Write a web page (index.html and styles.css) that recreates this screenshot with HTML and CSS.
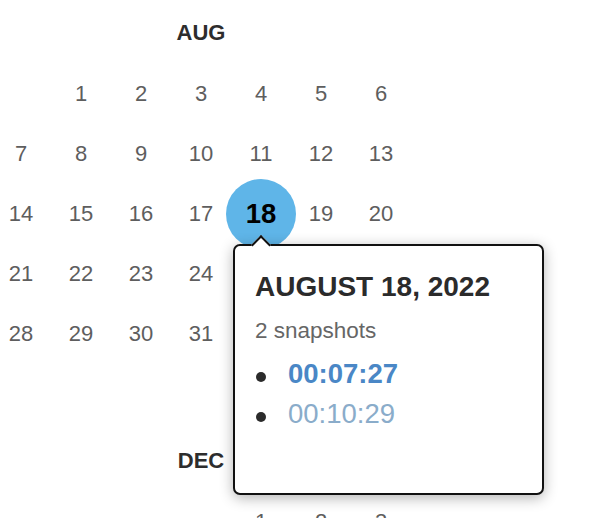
FILE: index.html
```html
<!DOCTYPE html>
<html lang="en">
<head>
<meta charset="utf-8">
<title>Snapshot calendar</title>
<link rel="stylesheet" href="styles.css">
</head>
<body>
<div class="calendar">
  <section class="month">
    <h2 class="month-name">AUG</h2>
    <div class="days">
      <span class="day"></span>
      <span class="day">1</span><span class="day">2</span><span class="day">3</span><span class="day">4</span><span class="day">5</span><span class="day">6</span>
      <span class="day">7</span><span class="day">8</span><span class="day">9</span><span class="day">10</span><span class="day">11</span><span class="day">12</span><span class="day">13</span>
      <span class="day">14</span><span class="day">15</span><span class="day">16</span><span class="day">17</span>
      <div class="day selected">
        <span class="dot">18</span>
        <div class="tooltip">
          <h3 class="tooltip-title">AUGUST 18, 2022</h3>
          <p class="tooltip-count">2 snapshots</p>
          <ul class="snapshots">
            <li><a class="snap snap-current" href="#">00:07:27</a></li>
            <li><a class="snap" href="#">00:10:29</a></li>
          </ul>
        </div>
      </div>
      <span class="day">19</span><span class="day">20</span>
      <span class="day">21</span><span class="day">22</span><span class="day">23</span><span class="day">24</span><span class="day">25</span><span class="day">26</span><span class="day">27</span>
      <span class="day">28</span><span class="day">29</span><span class="day">30</span><span class="day">31</span>
    </div>
  </section>
  <section class="month">
    <h2 class="month-name">DEC</h2>
    <div class="days">
      <span class="day"></span><span class="day"></span><span class="day"></span><span class="day"></span>
      <span class="day">1</span><span class="day">2</span><span class="day">3</span>
      <span class="day">4</span><span class="day">5</span><span class="day">6</span><span class="day">7</span><span class="day">8</span><span class="day">9</span><span class="day">10</span>
    </div>
  </section>
</div>
</body>
</html>
```

FILE: styles.css
```css
html, body {
  margin: 0;
  padding: 0;
  background: #ffffff;
}

body {
  font-family: "Liberation Sans", Arial, Helvetica, sans-serif;
  overflow: hidden;
}

.calendar {
  width: 420px;
  margin-left: -9px;
}

.month {
  margin-bottom: 4px;
}

.month-name {
  margin: 0;
  height: 63px;
  padding-top: 1px;
  line-height: 64px;
  font-size: 22px;
  font-weight: bold;
  color: #2d2d2d;
  text-align: center;
}

.days {
  display: grid;
  grid-template-columns: repeat(7, 60px);
  grid-template-rows: repeat(6, 60px);
}

.day {
  display: flex;
  align-items: center;
  justify-content: center;
  font-size: 22px;
  line-height: 60px;
  color: #5e5e5e;
}

.selected {
  position: relative;
}

.dot {
  flex-shrink: 0;
  width: 70px;
  height: 70px;
  border-radius: 50%;
  background: #5fb5e8;
  display: flex;
  align-items: center;
  justify-content: center;
  font-size: 27.5px;
  line-height: normal;
  font-weight: bold;
  color: #000000;
}

.tooltip {
  position: absolute;
  z-index: 10;
  top: 100%;
  left: 2px;
  width: 311px;
  height: 251px;
  box-sizing: border-box;
  padding: 25px 20px 0 20px;
  background: #ffffff;
  border: 2px solid #111111;
  border-radius: 7px;
  box-shadow: 0 3px 14px rgba(0, 0, 0, 0.3);
  line-height: normal;
  text-align: left;
}

.tooltip::before {
  content: "";
  position: absolute;
  top: -8px;
  left: 19px;
  width: 14px;
  height: 14px;
  box-sizing: border-box;
  background: #ffffff;
  border-top: 2px solid #111111;
  border-left: 2px solid #111111;
  transform: rotate(45deg);
}

.tooltip-title {
  margin: 0;
  font-size: 28px;
  line-height: 32px;
  font-weight: bold;
  color: #2b2b2b;
}

.tooltip-count {
  margin: 15px 0 10px 0;
  font-size: 22.5px;
  line-height: 26px;
  color: #666666;
}

.snapshots {
  list-style: none;
  margin: 0;
  padding: 0;
}

.snapshots li {
  display: flex;
  align-items: center;
  height: 40px;
  font-size: 27.5px;
  line-height: 40px;
}

.snapshots li::before {
  content: "";
  flex-shrink: 0;
  width: 10px;
  height: 10px;
  margin: 6px 22px 0 1px;
  border-radius: 50%;
  background: #2b2b2b;
}

.snap {
  color: #8aacca;
  text-decoration: none;
}

.snap-current {
  color: #4a87c6;
  font-weight: bold;
}
```
